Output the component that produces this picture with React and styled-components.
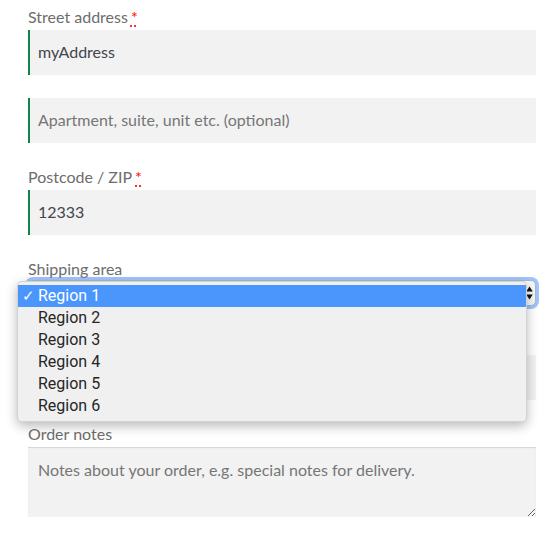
import React from "react";
import styled, { createGlobalStyle } from "styled-components";

const Global = createGlobalStyle`
  html, body { margin: 0; padding: 0; background: #ffffff; }
  * { box-sizing: border-box; }
`;

const Page = styled.form`
  position: relative;
  padding: 4px 20px 20px 28px;
  font-family: Lato, "Open Sans", sans-serif;
  font-size: 16px;
  color: #6d6d6d;
`;

const FormRow = styled.div`
  position: relative;
  padding-top: ${(p) => p.$pt ?? 0}px;
  margin-bottom: ${(p) => p.$mb ?? 21}px;
`;

const Label = styled.label`
  display: block;
  line-height: 26px;
  color: #6d6d6d;
`;

const Required = styled.abbr`
  color: #ff0000;
  text-decoration: underline dotted;
  text-underline-offset: 3px;
  cursor: help;
  margin-left: 3px;
`;

const TextInput = styled.input`
  display: block;
  width: 100%;
  height: 45px;
  border: 0;
  outline: none;
  margin: 0;
  padding: 0 10px 2px;
  background: #f2f2f2;
  box-shadow: ${(p) => (p.$valid ? "inset 2px 0 0 #0f834d" : "none")};
  font-family: inherit;
  font-size: 16px;
  color: #43454b;
  &::placeholder { color: #767676; opacity: 1; }
`;

const SelectWrap = styled.div`
  position: relative;
  margin-top: -2px;
`;

const SelectBox = styled.div`
  height: 26px;
  border: 1px solid #a8b9cf;
  border-radius: 5px;
  background: #f7f7f7;
  box-shadow: 0 0 0 3px rgba(80, 150, 245, 0.55);
  display: flex;
  align-items: center;
  justify-content: flex-end;
  padding-right: 2px;
`;

const Menu = styled.ul`
  position: absolute;
  left: -11px;
  top: 1px;
  width: calc(100% + 2px);
  margin: 0;
  padding: 3px 0 4px;
  list-style: none;
  background: #f0f0f0;
  border-radius: 5px;
  border: 0.5px solid rgba(0, 0, 0, 0.12);
  box-shadow: 0 4px 12px rgba(0, 0, 0, 0.28);
  z-index: 10;
`;

const MenuItem = styled.li`
  position: relative;
  height: 22px;
  line-height: 22px;
  padding-left: 20px;
  font-family: Roboto, "Liberation Sans", sans-serif;
  font-size: 16px;
  color: ${(p) => (p.$selected ? "#ffffff" : "#262626")};
  background: ${(p) => (p.$selected ? "#4a96fd" : "transparent")};
`;

const Check = styled.span`
  position: absolute;
  left: 4px;
  top: 0;
  font-size: 15px;
`;

const TextArea = styled.textarea`
  display: block;
  width: 100%;
  height: 70px;
  margin: 0;
  border: 0;
  outline: none;
  padding: 10px;
  background: #f2f2f2;
  box-shadow: inset 0 1px 1px rgba(0, 0, 0, 0.125);
  font-family: inherit;
  font-size: 16px;
  line-height: 26px;
  color: #43454b;
  resize: vertical;
  &::placeholder { color: #767676; opacity: 1; }
`;

const Arrows = () => (
  <svg width="7" height="14" viewBox="0 0 7 14" aria-hidden="true">
    <path d="M3.5 0.5 L6.8 5.6 L0.2 5.6 Z" fill="#111" />
    <path d="M3.5 13.5 L6.8 8.4 L0.2 8.4 Z" fill="#111" />
  </svg>
);

const regions = ["Region 1", "Region 2", "Region 3", "Region 4", "Region 5", "Region 6"];

export default function App() {
  return (
    <>
      <Global />
      <Page onSubmit={(e) => e.preventDefault()}>
        <FormRow $mb={23}>
          <Label htmlFor="street">
            Street address<Required title="required">*</Required>
          </Label>
          <TextInput id="street" $valid defaultValue="myAddress" />
        </FormRow>
        <FormRow $mb={21}>
          <TextInput $valid placeholder="Apartment, suite, unit etc. (optional)" />
        </FormRow>
        <FormRow $mb={21}>
          <Label htmlFor="zip">
            Postcode / ZIP<Required title="required">*</Required>
          </Label>
          <TextInput id="zip" $valid defaultValue="12333" />
        </FormRow>
        <FormRow $mb={23}>
          <Label>Shipping area</Label>
          <SelectWrap>
            <SelectBox>
              <Arrows />
            </SelectBox>
            <Menu>
              {regions.map((r, i) => (
                <MenuItem key={r} $selected={i === 0}>
                  {i === 0 && <Check>✓</Check>}
                  {r}
                </MenuItem>
              ))}
            </Menu>
          </SelectWrap>
        </FormRow>
        <FormRow $pt={26} $mb={21}>
          <TextInput aria-label="Phone" />
        </FormRow>
        <FormRow $mb={0}>
          <Label htmlFor="notes">Order notes</Label>
          <TextArea id="notes" placeholder="Notes about your order, e.g. special notes for delivery." />
        </FormRow>
      </Page>
    </>
  );
}
